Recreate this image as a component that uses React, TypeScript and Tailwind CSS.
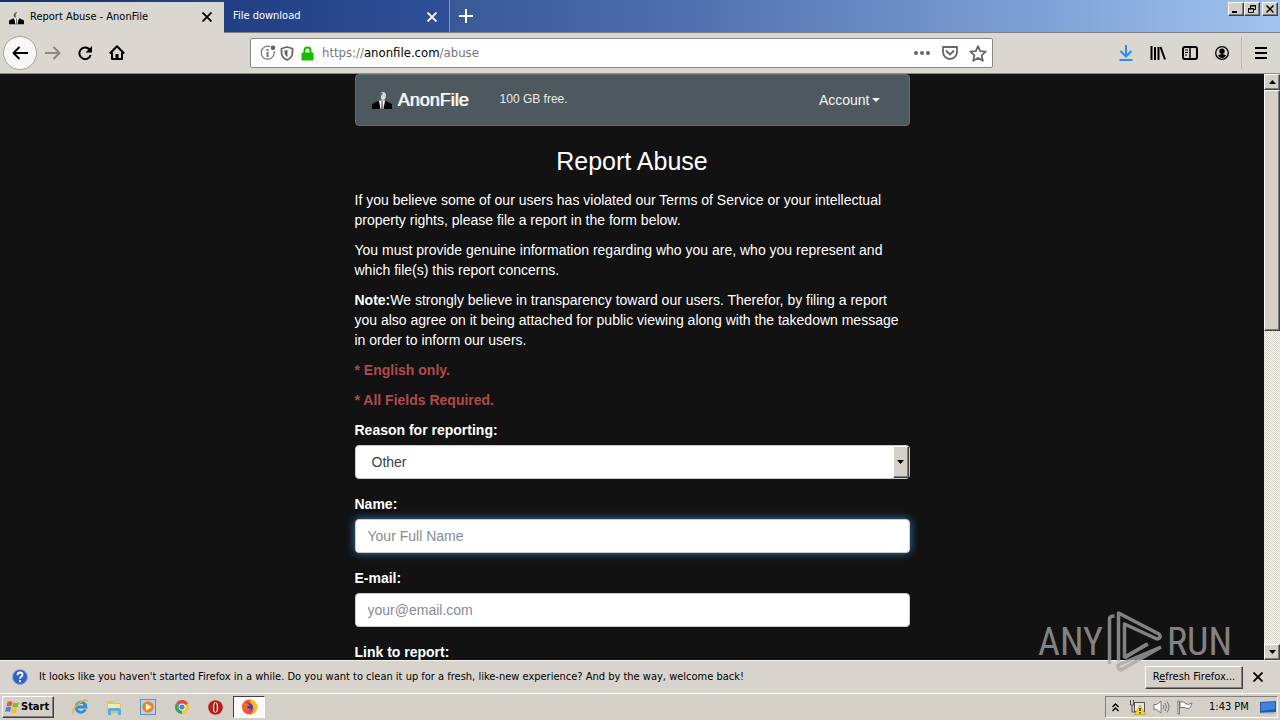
import type { ReactNode } from "react";

const raised =
  "bg-[#d4d0c8] border border-t-white border-l-white border-r-[#404040] border-b-[#404040] shadow-[inset_-1px_-1px_0_#808080]";
const label = "block font-bold leading-5";
const field =
  "block mt-[5px] w-full h-[34px] rounded-sm border border-[#cccccc] bg-white px-3 text-[#3a3f44] placeholder:text-[#868c92] outline-none";

const Close = () => (
  <svg width="10" height="10" viewBox="0 0 10 10" stroke="currentColor" strokeWidth="1.8">
    <path d="M.5 .5l9 9M9.5 .5l-9 9" />
  </svg>
);

const Suit = ({ size }: { size: number }) => (
  <svg width={size} height={size} viewBox="0 0 20 20">
    <path d="M0 19v-5l6-3 4 3 4-3 6 3v5z" fill="#050505" />
    <path d="M7 10.500h6L11.500 19h-3z" fill="#fff" />
    <path d="M8 5q0-3 3-3t3 3.500q0 3.500-3 5-3-1.500-3-5.500z" fill="#d5dad8" />
    <path d="M6 8q1-6 5-5l-2 3v5z" fill="#5a605e" />
    <path d="M9.500 11h1.200l.8 8h-2.500z" fill="#777" />
  </svg>
);

const ToolButton = ({ name, children }: { name: string; children: ReactNode }) => (
  <button aria-label={name} className="flex h-8 w-8 items-center justify-center">
    {children}
  </button>
);

const WindowButton = ({ name, children }: { name: string; children: ReactNode }) => (
  <button aria-label={name} className={`${raised} flex h-[14px] w-4 items-center justify-center`}>
    <svg width="10" height="9" viewBox="0 0 10 9" fill="none" stroke="#000">
      {children}
    </svg>
  </button>
);

const TabStrip = () => (
  <div className="flex h-[33px] shrink-0 border-b border-[#808080] bg-linear-to-r from-[#10306f] via-[#4a6aaa] to-[#a0c4f0] text-[11px]">
    <div className="mt-[2px] -mb-px flex w-[224px] items-center bg-[#dad6d0] pr-3 pb-px pl-[9px] text-black">
      <Suit size={15} />
      <span className="ml-[6px] flex-1 whitespace-nowrap">Report Abuse - AnonFile</span>
      <button aria-label="Close tab">
        <Close />
      </button>
    </div>
    <div className="flex w-[226px] items-center border-r border-[#8296c0] bg-linear-to-r from-[#203f85] to-[#2f4f96] pt-px pr-3 pl-[9px] text-white">
      <span className="flex-1">File download</span>
      <button aria-label="Close tab">
        <Close />
      </button>
    </div>
    <button aria-label="New tab" className="flex w-8 items-center justify-center text-white">
      <svg width="14" height="14" viewBox="0 0 14 14" stroke="currentColor" strokeWidth="2">
        <path d="M7 0v14M0 7h14" />
      </svg>
    </button>
    <div className="ml-auto flex items-start pt-[2px] pr-[2px]">
      <WindowButton name="Minimize">
        <path d="M1 7h5" strokeWidth="2" />
      </WindowButton>
      <WindowButton name="Restore">
        <path d="M3.500 3v-2.500h5v4h-2M3 1h6M1.500 3.500h5v4h-5zM1 4h6" />
      </WindowButton>
      <div className="w-[2px]" />
      <WindowButton name="Close">
        <path d="M1.500 .5l7 7M8.500 .5l-7 7" strokeWidth="1.500" />
      </WindowButton>
    </div>
  </div>
);

const NavBar = () => (
  <div className="flex h-[41px] shrink-0 items-center border-b border-[#8f8c86] bg-[#dad6d0] px-[3px] text-black">
    <button
      aria-label="Back"
      className="flex size-[34px] items-center justify-center rounded-full border border-[#a5a29c] bg-[#f8f7f6]"
    >
      <svg width="16" height="14" viewBox="0 0 16 14" fill="none" stroke="currentColor" strokeWidth="2">
        <path d="M7.500 1l-6 6 6 6M1.500 7h14.500" strokeLinejoin="round" />
      </svg>
    </button>
    <ToolButton name="Forward">
      <svg width="16" height="14" viewBox="0 0 16 14" fill="none" stroke="#8b8884" strokeWidth="2">
        <path d="M8.500 1l6 6-6 6M14.500 7H0" strokeLinejoin="round" />
      </svg>
    </ToolButton>
    <ToolButton name="Reload">
      <svg width="16" height="16" viewBox="0 0 16 16" fill="none" stroke="currentColor" strokeWidth="2">
        <path d="M12.500 4.500a5.800 5.800 0 1 0 1.200 5.500" />
        <path d="M15 1v6.500H8.500z" fill="currentColor" stroke="none" />
      </svg>
    </ToolButton>
    <ToolButton name="Home">
      <svg width="16" height="16" viewBox="0 0 16 16" fill="none" stroke="currentColor" strokeWidth="2">
        <path d="M.8 8.500L8 1.300l7.200 7.200M3 7.500V14h10V7.500" strokeLinejoin="round" />
        <path d="M6.500 14v-5h3v5z" fill="currentColor" stroke="none" />
      </svg>
    </ToolButton>
    <div className="ml-[117px] flex h-[30px] min-w-0 flex-1 items-center rounded-xs border border-[#8a8781] bg-white pl-[9px] text-[#0c0c0d]">
      <svg width="16" height="16" viewBox="0 0 16 16" fill="none" stroke="#737373">
        <path d="M10 1.600a6.500 6.500 0 1 0 4 4.400" strokeWidth="1.200" />
        <path d="M7.500 7v5M7.500 4v2" strokeWidth="2" />
        <circle cx="13" cy="2.800" r="2.300" fill="#606060" stroke="none" />
      </svg>
      <svg className="ml-1" width="14" height="15" viewBox="0 0 14 15" fill="none" stroke="#666" strokeWidth="1.800">
        <path d="M7 1L12.500 2.500v4c0 3.500-2 6-5.500 7.500C3.500 12.500 1.500 10 1.500 6.500v-4z" strokeLinejoin="round" />
        <path d="M7.500 4v7C5.500 10 4.500 8 4.500 6.500V4.500z" fill="#666" stroke="none" />
      </svg>
      <svg className="ml-[7px]" width="13" height="15" viewBox="0 0 13 15">
        <path d="M3.500 7V4.500a3 3 0 0 1 6 0V7" fill="none" stroke="#12bc00" strokeWidth="2" />
        <rect x=".5" y="6.500" width="12" height="8" rx="1" fill="#12bc00" />
      </svg>
      <span className="ml-2 flex-1 text-[13px] text-[#777]">
        https://<span className="text-black">anonfile.com</span>/abuse
      </span>
      <button aria-label="Page actions" className="flex w-7 justify-center">
        <svg width="16" height="4" viewBox="0 0 16 4" fill="#666">
          <circle cx="2" cy="2" r="2" />
          <circle cx="8" cy="2" r="2" />
          <circle cx="14" cy="2" r="2" />
        </svg>
      </button>
      <button aria-label="Save to Pocket" className="flex w-7 justify-center">
        <svg width="16" height="14" viewBox="0 0 16 14" fill="none" stroke="#666" strokeWidth="1.800" strokeLinecap="round" strokeLinejoin="round">
          <path d="M1 1h14v5a7 7 0 0 1-14 0z" />
          <path d="M4.500 5L8 8.500 11.500 5" />
        </svg>
      </button>
      <button aria-label="Bookmark" className="flex w-7 justify-center">
        <svg width="18" height="17" viewBox="0 0 18 17" fill="none" stroke="#666" strokeWidth="1.800" strokeLinejoin="round">
          <path d="M9 1.200l2.200 5 5.500.5-4.100 3.700 1.200 5.400L9 13l-4.800 2.800 1.200-5.400L1.300 6.700l5.500-.5z" />
        </svg>
      </button>
    </div>
    <div className="ml-[117px] flex items-center">
      <ToolButton name="Downloads">
        <svg width="14" height="16" viewBox="0 0 14 16" fill="none" stroke="#2a8cf0" strokeWidth="2">
          <path d="M7 0v11M1.500 6L7 11.500 12.500 6M.5 15h13" />
        </svg>
      </ToolButton>
      <ToolButton name="Library">
        <svg width="16" height="14" viewBox="0 0 16 14" fill="none" stroke="currentColor" strokeWidth="2">
          <path d="M1.500 0v14M5 1v13M8.500 1v13M10.500 1l4.500 12.500" />
        </svg>
      </ToolButton>
      <ToolButton name="Sidebars">
        <svg width="16" height="14" viewBox="0 0 16 14" fill="none" stroke="currentColor" strokeWidth="2">
          <rect x="1" y="1" width="14" height="12" rx="2" />
          <path d="M8 1v12" strokeWidth="1.500" />
          <path d="M3 4h3M3 6.500h3M3 9h2" strokeWidth="1" />
        </svg>
      </ToolButton>
      <ToolButton name="Account menu">
        <svg width="14" height="14" viewBox="0 0 14 14" fill="none">
          <circle cx="7" cy="7" r="6.300" stroke="currentColor" strokeWidth="1.300" />
          <circle cx="7" cy="5.200" r="2.700" fill="currentColor" />
          <path d="M2.800 9.500q4.200-3 8.400 0-1.500 2.500-4.200 2.500t-4.200-2.500z" fill="currentColor" />
        </svg>
      </ToolButton>
      <div className="mx-[3px] h-8 w-px bg-[#bab7b1]" />
      <ToolButton name="Open menu">
        <svg width="12" height="12" viewBox="0 0 12 12" stroke="currentColor" strokeWidth="2">
          <path d="M0 1h12M0 6h12M0 11h12" />
        </svg>
      </ToolButton>
    </div>
  </div>
);

const ScrollBar = () => (
  <div className="flex w-4 shrink-0 flex-col bg-[repeating-conic-gradient(#ffffff_0_25%,#d4d0c8_0_50%)] bg-[length:2px_2px]">
    <button aria-label="Scroll up" className={`${raised} flex h-4 items-center justify-center`}>
      <svg width="7" height="4" viewBox="0 0 7 4">
        <path d="M0 4l3.500-4L7 4z" />
      </svg>
    </button>
    <div className={`${raised} h-[241px]`} />
    <button aria-label="Scroll down" className={`${raised} mt-auto flex h-4 items-center justify-center`}>
      <svg width="7" height="4" viewBox="0 0 7 4">
        <path d="M0 0l3.500 4L7 0z" />
      </svg>
    </button>
  </div>
);

const AbusePage = () => (
  <div className="min-w-0 flex-1 overflow-hidden bg-[#121212] text-sm text-white">
    <div className="mx-auto max-w-[555px] font-['Liberation_Sans',Arial,sans-serif]">
      <nav className="flex h-[52px] items-center rounded-sm border border-[#656d70] bg-[#4d595e] pr-[29px] pl-4">
        <a
          href="#"
          className="flex items-center gap-[6px] text-lg text-white [text-shadow:1px_0_0_rgba(255,255,255,0.7)]"
        >
          <Suit size={20} />
          AnonFile
        </a>
        <span className="ml-[31px] pb-[2px] text-xs text-[#e8ebec]">100 GB free.</span>
        <a href="#" className="ml-auto flex items-center gap-[2px] text-[#f2f4f5]">
          Account
          <svg width="8" height="4" viewBox="0 0 8 4" fill="currentColor">
            <path d="M0 0h8L4 4z" />
          </svg>
        </a>
      </nav>
      <h1 className="mt-5 mb-[14px] text-center text-[25px] leading-[30px]">Report Abuse</h1>
      <div className="flex flex-col gap-[10px] leading-5">
        <p>
          If you believe some of our users has violated our Terms of Service or your intellectual
          <br />
          property rights, please file a report in the form below.
        </p>
        <p>
          You must provide genuine information regarding who you are, who you represent and
          <br />
          which file(s) this report concerns.
        </p>
        <p>
          <strong>Note:</strong>We strongly believe in transparency toward our users. Therefor, by filing a report
          <br />
          you also agree on it being attached for public viewing along with the takedown message
          <br />
          in order to inform our users.
        </p>
        <p className="font-bold text-[#b04a4c]">* English only.</p>
        <p className="font-bold text-[#b04a4c]">* All Fields Required.</p>
      </div>
      <form className="mt-[10px] flex flex-col gap-[15px]">
        <div>
          <label htmlFor="reason" className={label}>
            Reason for reporting:
          </label>
          <div className="relative">
            <select id="reason" className={`${field} appearance-none pl-4`}>
              <option>Other</option>
            </select>
            <span className={`${raised} pointer-events-none absolute inset-y-px right-px flex w-4 items-center justify-center`}>
              <svg width="7" height="4" viewBox="0 0 7 4">
                <path d="M0 0l3.500 4L7 0z" />
              </svg>
            </span>
          </div>
        </div>
        <div>
          <label htmlFor="name" className={label}>
            Name:
          </label>
          <input
            id="name"
            type="text"
            placeholder="Your Full Name"
            className={`${field} border-[#66afe9] shadow-[0_0_8px_rgba(60,150,220,0.8)]`}
          />
        </div>
        <div>
          <label htmlFor="email" className={label}>
            E-mail:
          </label>
          <input id="email" type="email" placeholder="your@email.com" className={field} />
        </div>
        <div>
          <label htmlFor="link" className={label}>
            Link to report:
          </label>
          <input id="link" type="text" className={field} />
        </div>
      </form>
    </div>
  </div>
);

const Watermark = () => (
  <div className="pointer-events-none absolute right-12 bottom-[46px] flex items-center font-['Roboto_Condensed',Roboto,sans-serif] text-[38px] text-[#a8a8a8] opacity-75">
    <span>ANY</span>
    <svg width="56" height="64" viewBox="0 0 56 64" fill="none" stroke="currentColor" strokeWidth="3.500" strokeLinejoin="round" className="mx-1">
      <path d="M2.500 54V9q0-3 5-3" />
      <path d="M11.500 51V3L52 24q3 4-2 5L17.500 14v33L41 34" />
      <path d="M17.500 48L40 34M54 37L14 60q-3.500-1-3-5L54 37" />
    </svg>
    <span>RUN</span>
  </div>
);

const NoticeBar = () => (
  <div className="flex h-[33px] shrink-0 items-center border-t border-[#f3f1ed] bg-[#d8d3cc] pr-[17px] pl-3 text-[11px] text-black">
    <svg width="16" height="16" viewBox="0 0 16 16">
      <circle cx="8" cy="8" r="7.500" fill="#2f62c4" stroke="#8fa9dc" />
      <path d="M5.500 6.200q0-2.700 2.500-2.700t2.500 2.200q0 1.300-1.300 2T8 9.800" fill="none" stroke="#fff" strokeWidth="1.800" />
      <circle cx="8" cy="12.200" r="1.100" fill="#fff" />
    </svg>
    <span className="ml-[11px] flex-1 whitespace-nowrap">
      It looks like you haven't started Firefox in a while. Do you want to clean it up for a fresh, like-new experience? And by the way, welcome back!
    </span>
    <button className={`${raised} h-[23px] w-[98px] whitespace-nowrap`}>
      R<u>e</u>fresh Firefox...
    </button>
    <button aria-label="Close notification" className="ml-[10px]">
      <Close />
    </button>
  </div>
);

const TaskBar = () => (
  <div className="flex h-[27px] shrink-0 items-center border-t border-white bg-[#d4d0c8] px-[2px] text-[11px] text-black">
    <button className={`${raised} flex h-[22px] w-[52px] items-center gap-px pl-[2px] font-bold`}>
      <svg width="15" height="14" viewBox="0 0 15 14" className="shrink-0">
        <path d="M2.500 2Q5 .5 7.500 2L6.300 6.500Q4 5.200 1.500 6.500z" fill="#e8562a" />
        <path d="M8.300 2.400Q11 3.800 14 2.200l-1.300 4.600q-2.700 1.400-5.400 0z" fill="#7dba3c" />
        <path d="M1.200 7.500q2.500-1.400 5 0L5 12Q2.500 10.700 0 12z" fill="#3c84d8" />
        <path d="M7 7.800q2.700 1.400 5.400 0L11.200 12.400q-2.700 1.400-5.400 0z" fill="#f6c02c" />
      </svg>
      Start
    </button>
    <div className="ml-[10px] flex items-center">
      <button aria-label="Internet Explorer" className="flex w-[33px] justify-center">
        <svg width="17" height="16" viewBox="0 0 17 16" fill="none">
          <path d="M13.500 10.500a5 5 0 1 1 .5-2.500H5" stroke="#2a8fdc" strokeWidth="2.800" />
          <path d="M1.500 15C-1 12 5 4.500 10.500 2q5-2.300 5 .5" stroke="#e8b830" strokeWidth="1.500" />
        </svg>
      </button>
      <button aria-label="Explorer" className="flex w-[33px] justify-center">
        <svg width="16" height="15" viewBox="0 0 16 15">
          <path d="M1 1h6l1 2h7v10H1z" fill="#e3c560" />
          <path d="M2 4h12v5H2z" fill="#f8ebb0" />
          <path d="M2 15V9.500Q2 8 4 8h9q2 0 2 1.500V15h-3v-4H5v4z" fill="#5aaede" />
        </svg>
      </button>
      <button aria-label="Media Player" className="flex w-[35px] justify-center">
        <svg width="16" height="16" viewBox="0 0 16 16">
          <rect x=".5" y=".5" width="15" height="15" fill="#b5d3ee" stroke="#5b93c8" />
          <circle cx="8" cy="8" r="5.800" fill="#f08418" />
          <path d="M6 4.500L11.500 8 6 11.500z" fill="#fff" />
        </svg>
      </button>
      <button aria-label="Chrome" className="flex w-[33px] justify-center">
        <svg width="14" height="14" viewBox="0 0 14 14">
          <path d="M7 7L.9 3.500A7 7 0 0 1 13.100 3.500z" fill="#dd4b3e" />
          <path d="M7 7L13.100 3.500A7 7 0 0 1 7 14z" fill="#f6c82e" />
          <path d="M7 7v7A7 7 0 0 1 .9 3.500z" fill="#3ba55a" />
          <circle cx="7" cy="7" r="3.400" fill="#fff" />
          <circle cx="7" cy="7" r="2.600" fill="#4286e8" />
        </svg>
      </button>
      <button aria-label="Opera" className="flex w-[35px] justify-center">
        <svg width="15" height="15" viewBox="0 0 15 15">
          <circle cx="7.500" cy="7.500" r="7.300" fill="#b81c1c" />
          <ellipse cx="7.500" cy="7.500" rx="2.600" ry="5.200" fill="#f4dede" />
          <ellipse cx="7.500" cy="7.500" rx="1.200" ry="4.600" fill="#8d1212" />
        </svg>
      </button>
      <button
        aria-label="Firefox"
        className="flex h-[22px] w-[32px] items-center justify-center border border-t-[#404040] border-r-white border-b-white border-l-[#404040] bg-[#fbfaf9]"
      >
        <svg width="17" height="16" viewBox="0 0 17 16">
          <circle cx="8.500" cy="8" r="7.500" fill="#f0502c" />
          <path d="M9 .5q7 1 7.500 8-1 6-7 7 5-4 2-9-3-2-2.500-6z" fill="#fcb928" />
          <circle cx="8" cy="8" r="3.800" fill="#4a3cc0" />
          <path d="M1 7q1-4 3-5 0 2 2 2.500 2 .5 3 2-3 0-3 2 1 2 4 1-1 3-4 2.500Q2 11 1 7z" fill="#f4682a" />
        </svg>
      </button>
    </div>
    <div className="ml-auto flex h-[22px] items-center border border-t-[#808080] border-r-white border-b-white border-l-[#808080] pr-px pl-[6px]">
      <svg width="7" height="9" viewBox="0 0 7 9" fill="none" stroke="#000" strokeWidth="1.300">
        <path d="M.5 4l3-3 3 3M.5 8l3-3 3 3" />
      </svg>
      <svg className="ml-[10px]" width="17" height="16" viewBox="0 0 17 16">
        <rect x="5.500" y="3.500" width="10" height="9" fill="#e8e8e8" stroke="#555" />
        <path d="M1.500 1v5h3V1M3 6v7h4" fill="none" stroke="#555" />
        <path d="M11 6l5.500 9.500h-11z" fill="#f8d820" stroke="#a88b00" strokeWidth=".5" />
        <path d="M11 9v3M11 13v1.500" stroke="#000" strokeWidth="1.200" />
      </svg>
      <svg className="ml-[7px]" width="17" height="14" viewBox="0 0 17 14" fill="none" stroke="#777">
        <path d="M1 4.500h2.500L8 1v12L3.500 9.500H1z" fill="#fff" />
        <path d="M10 5q1.500 2 0 4M12 3q3 4 0 8M14 1.500q4 5.500 0 11" />
      </svg>
      <svg className="ml-[7px]" width="16" height="15" viewBox="0 0 16 15" fill="#fff" stroke="#777">
        <path d="M1 1h1.500v13H1zM3 2q3-1 5 1l1 1q3 1 6-1-1 4-3 5.500-3 .5-4-1H3z" />
      </svg>
      <span className="mr-[11px] ml-4 w-[40px] whitespace-nowrap">1:43 PM</span>
      <svg width="16" height="13" viewBox="0 0 16 13">
        <path d="M0 1l16-1v11l-16 1z" fill="#2458a8" />
        <path d="M1 2l14-1v7L1 10z" fill="#3d84dc" />
        <path d="M1 12h13" stroke="#7fa6c8" />
      </svg>
    </div>
  </div>
);

export default function App() {
  return (
    <div className="relative flex h-screen flex-col overflow-hidden font-['DejaVu_Sans_Condensed','DejaVu_Sans',Tahoma,sans-serif]">
      <TabStrip />
      <NavBar />
      <main className="flex min-h-0 flex-1">
        <AbusePage />
        <ScrollBar />
      </main>
      <NoticeBar />
      <TaskBar />
      <Watermark />
    </div>
  );
}
